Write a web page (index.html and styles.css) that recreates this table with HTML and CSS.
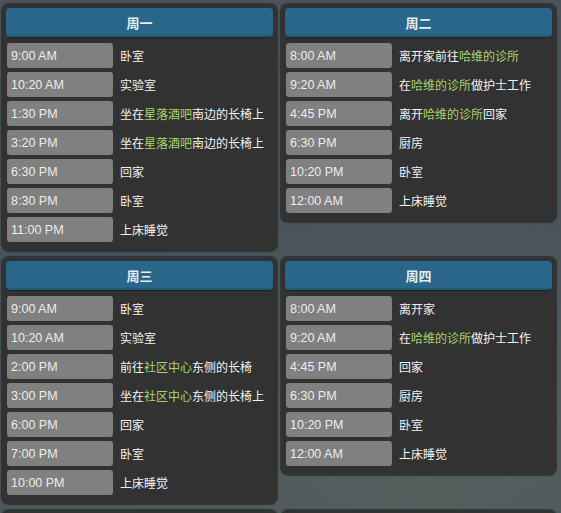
FILE: index.html
```html
<!DOCTYPE html>
<html lang="zh-CN">
<head>
<meta charset="utf-8">
<title>日程</title>
<link rel="stylesheet" href="styles.css">
</head>
<body>
<div class="grid">
  <section class="card">
    <h2 class="day">周一</h2>
    <ul class="rows">
      <li class="row"><span class="time">9:00 AM</span><span class="place">卧室</span></li>
      <li class="row"><span class="time">10:20 AM</span><span class="place">实验室</span></li>
      <li class="row"><span class="time">1:30 PM</span><span class="place">坐在<em class="hl">星落酒吧</em>南边的长椅上</span></li>
      <li class="row"><span class="time">3:20 PM</span><span class="place">坐在<em class="hl">星落酒吧</em>南边的长椅上</span></li>
      <li class="row"><span class="time">6:30 PM</span><span class="place">回家</span></li>
      <li class="row"><span class="time">8:30 PM</span><span class="place">卧室</span></li>
      <li class="row"><span class="time">11:00 PM</span><span class="place">上床睡觉</span></li>
    </ul>
  </section>
  <section class="card">
    <h2 class="day">周二</h2>
    <ul class="rows">
      <li class="row"><span class="time">8:00 AM</span><span class="place">离开家前往<em class="hl">哈维的诊所</em></span></li>
      <li class="row"><span class="time">9:20 AM</span><span class="place">在<em class="hl">哈维的诊所</em>做护士工作</span></li>
      <li class="row"><span class="time">4:45 PM</span><span class="place">离开<em class="hl">哈维的诊所</em>回家</span></li>
      <li class="row"><span class="time">6:30 PM</span><span class="place">厨房</span></li>
      <li class="row"><span class="time">10:20 PM</span><span class="place">卧室</span></li>
      <li class="row"><span class="time">12:00 AM</span><span class="place">上床睡觉</span></li>
    </ul>
  </section>
  <section class="card">
    <h2 class="day">周三</h2>
    <ul class="rows">
      <li class="row"><span class="time">9:00 AM</span><span class="place">卧室</span></li>
      <li class="row"><span class="time">10:20 AM</span><span class="place">实验室</span></li>
      <li class="row"><span class="time">2:00 PM</span><span class="place">前往<em class="hl">社区中心</em>东侧的长椅</span></li>
      <li class="row"><span class="time">3:00 PM</span><span class="place">坐在<em class="hl">社区中心</em>东侧的长椅上</span></li>
      <li class="row"><span class="time">6:00 PM</span><span class="place">回家</span></li>
      <li class="row"><span class="time">7:00 PM</span><span class="place">卧室</span></li>
      <li class="row"><span class="time">10:00 PM</span><span class="place">上床睡觉</span></li>
    </ul>
  </section>
  <section class="card">
    <h2 class="day">周四</h2>
    <ul class="rows">
      <li class="row"><span class="time">8:00 AM</span><span class="place">离开家</span></li>
      <li class="row"><span class="time">9:20 AM</span><span class="place">在<em class="hl">哈维的诊所</em>做护士工作</span></li>
      <li class="row"><span class="time">4:45 PM</span><span class="place">回家</span></li>
      <li class="row"><span class="time">6:30 PM</span><span class="place">厨房</span></li>
      <li class="row"><span class="time">10:20 PM</span><span class="place">卧室</span></li>
      <li class="row"><span class="time">12:00 AM</span><span class="place">上床睡觉</span></li>
    </ul>
  </section>
  <div class="card card-stub" aria-hidden="true"></div>
  <div class="card card-stub" aria-hidden="true"></div>
</div>
</body>
</html>
```
FILE: styles.css
```css
html {
  overflow: hidden;
  height: 100%;
}
body {
  margin: 0;
  min-height: 100%;
  background: radial-gradient(ellipse 70% 50% at 75% 85%, #55605e 0%, rgba(85,96,94,0) 100%),
              linear-gradient(180deg, #49535a 0%, #47525a 45%, #4b5759 100%);
  font-family: "Liberation Sans", "Noto Sans CJK SC", sans-serif;
}
.grid {
  display: grid;
  grid-template-columns: 275px 275px;
  column-gap: 4px;
  row-gap: 6px;
  align-items: start;
  padding: 4px 0 0 2px;
}
.card {
  background: #323232;
  border-radius: 7px;
  padding: 4px 4px 9px 4px;
  box-shadow: 0 0 1px 1px rgba(30,30,30,0.6);
}
.card-stub {
  height: 40px;
}
.day {
  margin: 0 0 6px 0;
  height: 29px;
  line-height: 29px;
  background: #296689;
  border-radius: 4px;
  box-shadow: inset 0 -2px 0 #225a7a, 0 1px 1px rgba(0,0,0,0.35);
  color: #e6edf2;
  text-align: center;
  font-size: 13px;
  font-weight: bold;
  font-family: "Noto Sans CJK SC", sans-serif;
}
.rows {
  list-style: none;
  margin: 0;
  padding: 0 0 0 1px;
  display: flex;
  flex-direction: column;
  gap: 4px;
}
.row {
  display: flex;
  align-items: center;
  gap: 7px;
  height: 25px;
}
.time {
  flex: 0 0 106px;
  box-sizing: border-box;
  height: 25px;
  line-height: 26px;
  padding-left: 4px;
  background: #808080;
  border-radius: 3px;
  color: #ececec;
  font-size: 12.5px;
  font-family: "Liberation Sans", Arial, sans-serif;
}
.place {
  color: #f2f2f2;
  font-size: 12px;
  font-family: "Noto Sans CJK SC", sans-serif;
  white-space: nowrap;
}
.hl {
  font-style: normal;
  color: #a6d46c;
}
```
